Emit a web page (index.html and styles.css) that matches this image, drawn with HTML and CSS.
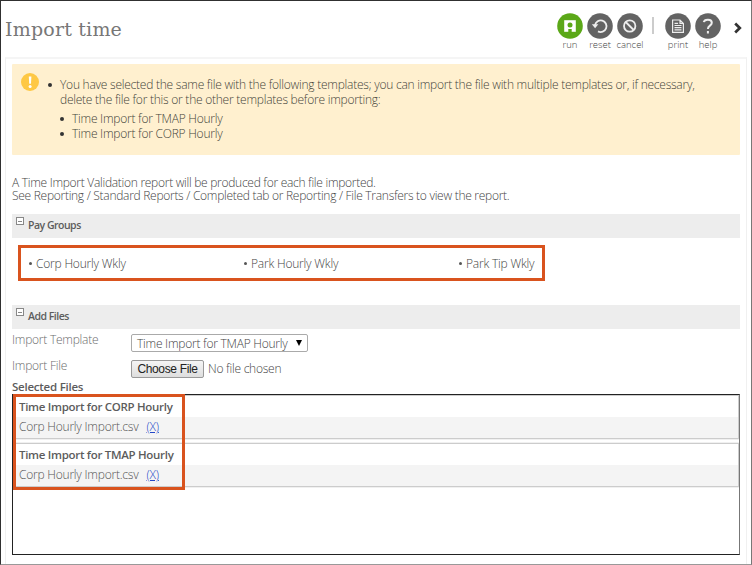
FILE: index.html
```html
<!DOCTYPE html>
<html lang="en">
<head>
<meta charset="utf-8">
<title>Import time</title>
<link rel="stylesheet" href="styles.css">
</head>
<body>
<div class="window">
  <header class="topbar">
    <h1>Import time</h1>
    <nav class="tools">
      <a class="tool run"><svg viewBox="0 0 26 26"><circle cx="13" cy="13" r="12.8" fill="#5ba818"/><path fill="#fff" d="M7.2 7.2h11.6v11.6H7.2z"/><circle cx="13" cy="12" r="2.5" fill="#5ba818"/><path fill="#5ba818" d="M11.3 16h3.4v3h-3.4z"/></svg><span>run</span></a>
      <a class="tool reset"><svg viewBox="0 0 26 26"><circle cx="13" cy="13" r="12.8" fill="#636363"/><path fill="none" stroke="#eee" stroke-width="1.8" d="M8 12.2A5.8 5.8 0 1 1 11 18.4"/><path fill="#eee" d="M4.8 11.2h6.6l-3.3 4z"/></svg><span>reset</span></a>
      <a class="tool cancel"><svg viewBox="0 0 26 26"><circle cx="13" cy="13" r="12.8" fill="#636363"/><g fill="none" stroke="#eee" stroke-width="1.8"><circle cx="12.7" cy="13" r="5.7"/><path d="M8.7 9l8 8"/></g></svg><span>cancel</span></a>
      <i class="divider"></i>
      <a class="tool print"><svg viewBox="0 0 26 26"><circle cx="13" cy="13" r="12.8" fill="#636363"/><g fill="none" stroke="#eee" stroke-width="1.2"><path d="M7.6 7h7.4l3.4 3.4v8.9H7.6zM15 7v3.4h3.4M9.5 10.3h3.6M9.5 12.5h7M9.5 14.7h7M9.5 16.9h7"/></g></svg><span>print</span></a>
      <a class="tool help"><svg viewBox="0 0 26 26"><circle cx="13" cy="13" r="12.8" fill="#636363"/><path fill="none" stroke="#eee" stroke-width="2" d="M8.8 9.2c.6-3.4 8-3.5 8 .5 0 3-3.9 2.9-3.9 6.3M12.9 18v2.4"/></svg><span>help</span></a>
      <svg class="next" viewBox="0 0 8 12"><path d="M1.2 1.5L5.8 6 1.2 10.5" fill="none" stroke="#333" stroke-width="2.7"/></svg>
    </nav>
  </header>
  <main class="panel">
    <section class="notice">
      <svg class="alert" viewBox="0 0 18 18"><circle cx="9" cy="9" r="9" fill="#fec844"/><path d="M7.8 3.6h2.6L10 10.8H8.2z" fill="#fff"/><circle cx="9.1" cy="13.5" r="1.5" fill="#fff"/></svg>
      <ul class="messages">
        <li>You have selected the same file with the following templates; you can import the file with multiple templates or, if necessary,<br>delete the file for this or the other templates before importing:
          <ul class="templates">
            <li>Time Import for TMAP Hourly</li>
            <li>Time Import for CORP Hourly</li>
          </ul>
        </li>
      </ul>
    </section>
    <p class="intro">A Time Import Validation report will be produced for each file imported.<br>See Reporting / Standard Reports / Completed tab or Reporting / File Transfers to view the report.</p>
    <h2 class="section"><i class="toggle"></i><span>Pay Groups</span></h2>
    <ul class="groups">
      <li>Corp Hourly Wkly</li><li>Park Hourly Wkly</li><li>Park Tip Wkly</li>
    </ul>
    <h2 class="section"><i class="toggle"></i><span>Add Files</span></h2>
    <div class="field">
      <label>Import Template</label>
      <div class="select"><span>Time Import for TMAP Hourly</span><svg viewBox="0 0 6 6"><path d="M0 0h6L3 6z"/></svg></div>
    </div>
    <div class="field file">
      <label>Import File</label>
      <button>Choose File</button><span class="nofile">No file chosen</span>
    </div>
    <h3>Selected Files</h3>
    <div class="files">
      <article><h4>Time Import for CORP Hourly</h4><p><span>Corp Hourly Import.csv</span><a>(X)</a></p></article>
      <article><h4>Time Import for TMAP Hourly</h4><p><span>Corp Hourly Import.csv</span><a>(X)</a></p></article>
      <div class="marker"></div>
    </div>
  </main>
</div>
</body>
</html>
```
FILE: styles.css
```css
* { box-sizing: border-box; }
body { margin: 0; background: #fff; color: #444; font: 300 12px/15px "Open Sans", sans-serif; letter-spacing: -0.24px; }
h1, h2, h3, h4, p, ul { margin: 0; padding: 0; }
.window { width: 752px; height: 565px; overflow: hidden; border: 1px solid #303030; border-right-color: #777; border-bottom-color: #999; }
.topbar { height: 56px; display: flex; justify-content: space-between; }
h1 { padding: 16px 0 0 4px; font: 400 19px/25px "DejaVu Serif", serif; letter-spacing: 0.2px; color: #777; }
.tools { display: flex; padding: 12px 9px 0 0; }
.tool { width: 30px; display: flex; flex-direction: column; align-items: center; font-size: 9.5px; line-height: 12px; letter-spacing: 0; }
.tool svg { width: 26px; height: 26px; flex: none; }
.tool span { white-space: nowrap; }
.divider { width: 2px; height: 17px; background: #ccc; margin: 4px 9px 0 7px; }
.next { width: 8px; height: 12px; margin: 9px 0 0 11px; }
.panel { margin: 0 4px; height: 520px; border: 1px solid #f0f0f0; border-top: 2px solid #f5f5f5; padding: 5px 6px; }
.notice { height: 91px; display: flex; padding: 9px 0 0 9px; background: #fff0cf; border-radius: 1px; color: #44443a; }
.alert { width: 18px; height: 18px; flex: none; }
.messages { margin: 4px 0 0 21px; list-style: none; white-space: nowrap; }
.messages li { position: relative; }
.messages li::before { content: ""; position: absolute; left: -12px; top: 6px; width: 4px; height: 4px; border-radius: 50%; background: #333; }
.templates { margin: 4px 0 0 12px; list-style: none; }
.intro { height: 59px; padding-top: 21px; line-height: 13px; letter-spacing: -0.28px; white-space: nowrap; }
.section { height: 24px; display: flex; background: #ededed; font-size: 10.5px; line-height: 23px; font-weight: 600; letter-spacing: -0.5px; color: #5c5c5c; }
.toggle { width: 8px; height: 8px; margin: 3px 4px 0 4px; border: 1px solid #888; background: linear-gradient(#888, #888) center / 4px 1px no-repeat #fff; }
.groups { margin: 7px 0 24px 6px; width: 527px; height: 36px; border: 3px solid #d9531e; display: grid; grid-template-columns: 215px 215px 1fr; list-style: none; line-height: 29px; padding-left: 8px; letter-spacing: -0.2px; white-space: nowrap; }
.groups li { display: flex; align-items: center; }
.groups li::before { content: ""; width: 3px; height: 3px; border-radius: 50%; background: #555; margin-right: 4px; margin-top: 1px; }
.field { display: flex; height: 27px; padding-top: 5px; }
.field label { width: 119px; color: #6c6c6c; line-height: 12px; }
.select { width: 177px; height: 18px; border: 1px solid #aaa; border-radius: 2px; display: flex; align-items: center; justify-content: space-between; padding: 0 5px; white-space: nowrap; }
.select svg { width: 6px; height: 6px; }
.file { height: 24px; padding-top: 4px; }
button { width: 73px; height: 18px; padding: 0; border: 1px solid #999; border-radius: 2px; background: linear-gradient(#f5f5f5, #dedede); font: 12px/14px "Liberation Sans", sans-serif; letter-spacing: -0.35px; color: #222; }
.nofile { margin-left: 4px; line-height: 18px; }
h3 { font-size: 11.5px; line-height: 14px; font-weight: 600; color: #5c5c5c; height: 14px; }
.files { position: relative; width: 728px; height: 161px; border: 1px solid #222; border-right-color: #777; }
article { height: 44px; margin-bottom: 4px; border: 1px solid #ccc; box-shadow: 0 1px 0 #f0f0f0; }
article + article { box-shadow: 0 1px 0 #f0f0f0, 0 -1px 0 #f0f0f0; }
h4 { height: 21px; padding-left: 5px; font-size: 11.5px; line-height: 21px; font-weight: 600; letter-spacing: -0.3px; color: #5c5c5c; }
article p { height: 21px; padding-left: 5px; background: #f4f4f4; line-height: 19px; letter-spacing: -0.22px; color: #555; }
article a { margin-left: 8px; color: #2448c8; text-decoration: underline; }
.marker { position: absolute; left: 0; top: -1px; width: 172px; height: 96px; border: 3px solid #d9531e; }
```
